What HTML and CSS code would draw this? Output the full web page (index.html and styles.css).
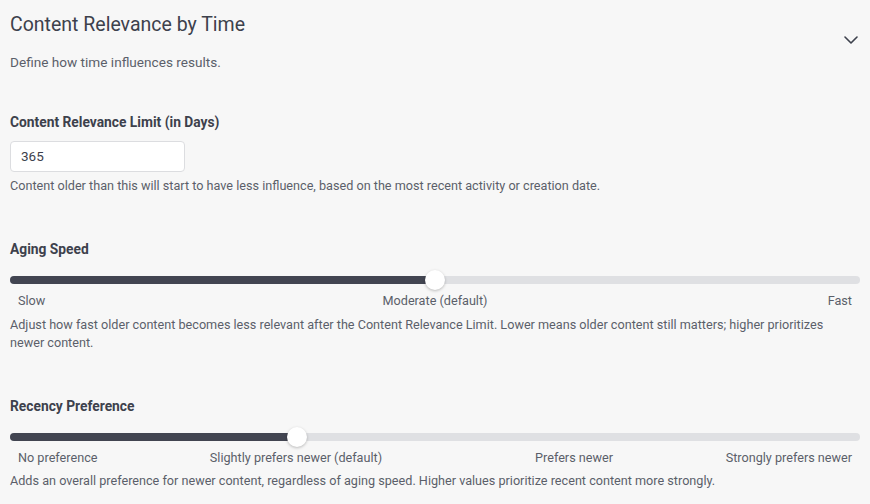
FILE: index.html
```html
<!DOCTYPE html>
<html>
<head>
<meta charset="utf-8">
<link rel="stylesheet" href="styles.css">
</head>
<body>
<div class="panel">
  <div class="header">
    <h2 class="title">Content Relevance by Time</h2>
    <svg class="chevron" width="14" height="8" viewBox="0 0 14 8"><path d="M1 1l6 6 6-6" fill="none" stroke="#3d414c" stroke-width="1.6" stroke-linecap="round" stroke-linejoin="round"/></svg>
  </div>
  <p class="subtitle">Define how time influences results.</p>

  <div class="field field-first">
    <label class="label">Content Relevance Limit (in Days)</label>
    <div class="input">365</div>
    <p class="help help-input">Content older than this will start to have less influence, based on the most recent activity or creation date.</p>
  </div>

  <div class="field">
    <label class="label">Aging Speed</label>
    <div class="slider">
      <div class="track"><div class="fill" style="width: 50%"></div></div>
      <div class="thumb-rail"><div class="thumb" style="left: 50%"></div></div>
    </div>
    <div class="ticks">
      <span class="tick tick-start">Slow</span>
      <span class="tick tick-mid" style="left: 50%">Moderate (default)</span>
      <span class="tick tick-end">Fast</span>
    </div>
    <p class="help help-slider">Adjust how fast older content becomes less relevant after the Content Relevance Limit. Lower means older content still matters; higher prioritizes newer content.</p>
  </div>

  <div class="field">
    <label class="label">Recency Preference</label>
    <div class="slider">
      <div class="track"><div class="fill" style="width: 33.33%"></div></div>
      <div class="thumb-rail"><div class="thumb" style="left: 33.33%"></div></div>
    </div>
    <div class="ticks">
      <span class="tick tick-start">No preference</span>
      <span class="tick tick-mid" style="left: 33.33%">Slightly prefers newer (default)</span>
      <span class="tick tick-mid" style="left: 66.67%">Prefers newer</span>
      <span class="tick tick-end">Strongly prefers newer</span>
    </div>
    <p class="help">Adds an overall preference for newer content, regardless of aging speed. Higher values prioritize recent content more strongly.</p>
  </div>
</div>
</body>
</html>
```

FILE: styles.css
```css
* { box-sizing: border-box; }
html, body {
  margin: 0;
  padding: 0;
  background: #f7f7f7;
}
body {
  font-family: Roboto, "Liberation Sans", sans-serif;
  color: #5b5f6a;
  width: 870px;
  height: 504px;
  overflow: hidden;
}
.panel {
  padding: 0 10px;
}
.header {
  display: flex;
  justify-content: space-between;
  align-items: flex-start;
  height: 44px;
}
.title {
  margin: 13px 0 0;
  font-size: 19.5px;
  line-height: 24px;
  font-weight: 400;
  color: #3d414c;
}
.chevron {
  margin: 36px 2px 0 0;
}
.subtitle {
  margin: 9px 0 0;
  font-size: 13.6px;
  line-height: 18px;
}
.field {
  margin-top: 45px;
}
.field-first {
  margin-top: 42px;
}
.label {
  display: block;
  font-size: 13.8px;
  line-height: 18px;
  font-weight: 700;
  color: #3d414c;
}
.input {
  margin-top: 10px;
  width: 175px;
  height: 31px;
  background: #fff;
  border: 1px solid #dcdde0;
  border-radius: 4px;
  padding: 0 10px;
  font-size: 13.5px;
  line-height: 29px;
  color: #3d414c;
}
.help {
  margin: 5px 0 0;
  font-size: 12.65px;
  line-height: 18px;
}
.help-slider { margin-top: 6px; }
.slider {
  position: relative;
  margin-top: 12px;
  height: 20px;
}
.track {
  position: absolute;
  left: 0;
  right: 0;
  top: 6px;
  height: 8px;
  border-radius: 4px;
  background: #dfe0e3;
  overflow: hidden;
}
.fill {
  height: 100%;
  background: #424551;
}
.thumb-rail {
  position: absolute;
  left: 10px;
  right: 10px;
  top: 0;
  height: 20px;
}
.thumb {
  position: absolute;
  top: 0;
  width: 20px;
  height: 20px;
  margin-left: -10px;
  border-radius: 50%;
  background: #fff;
  box-shadow: 0 1px 3px rgba(0,0,0,0.25);
}
.ticks {
  position: relative;
  margin: 2px 8px 0;
  height: 18px;
  font-size: 12.65px;
  line-height: 18px;
}
.tick {
  position: absolute;
  top: 0;
  white-space: nowrap;
}
.tick-start { left: 0; }
.tick-end { right: 0; }
.tick-mid { transform: translateX(-50%); }
```
